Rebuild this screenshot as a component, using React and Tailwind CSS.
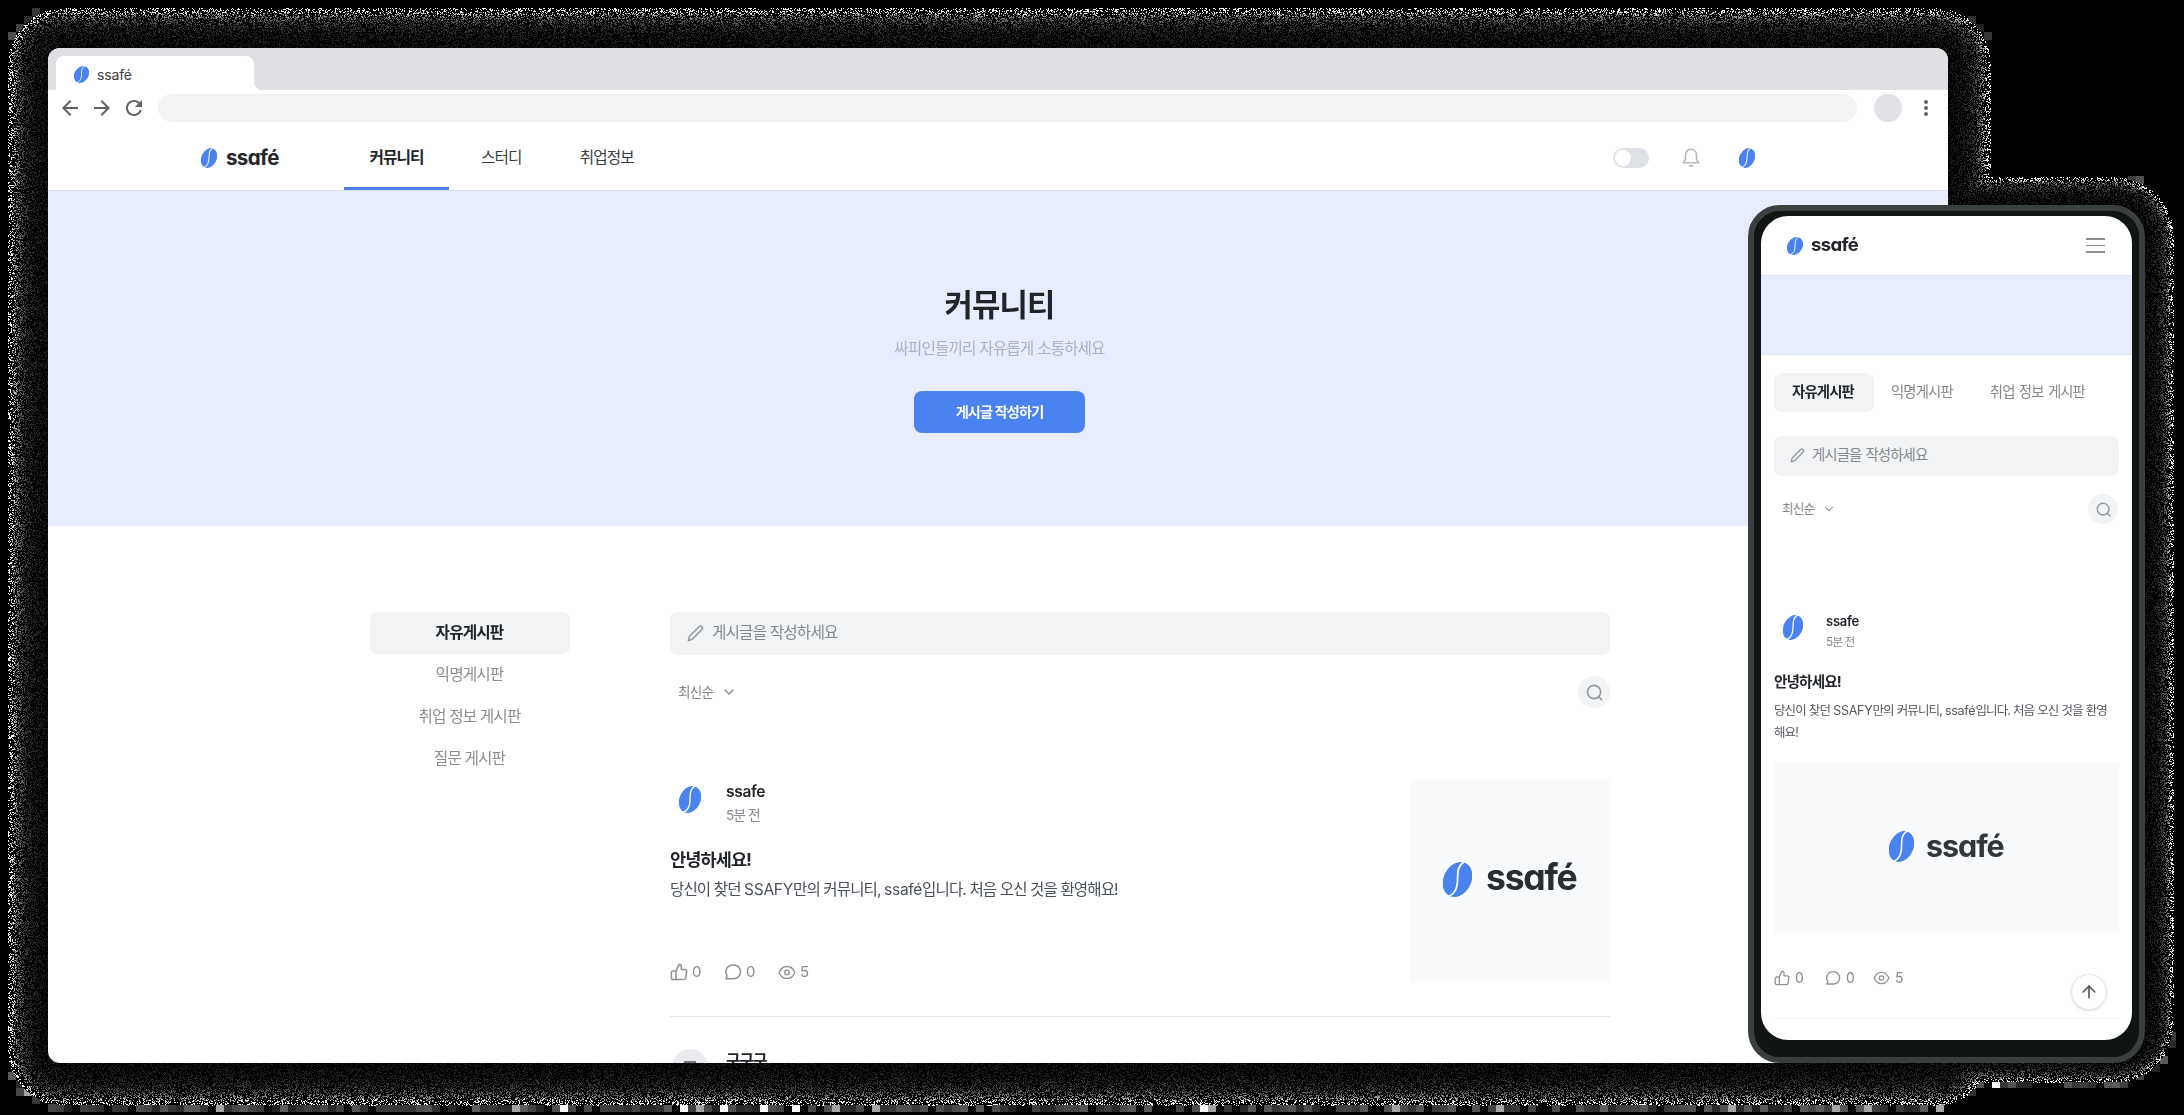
import { useLayoutEffect, useRef } from "react";
import { ChevronDown, ArrowUp } from "lucide-react";
import { MdArrowBack, MdArrowForward, MdRefresh, MdMoreVert } from "react-icons/md";

function Bean({ className, gap = "#ffffff" }) {
  return (
    <svg viewBox="0 0 29 35" preserveAspectRatio="none" className={className}>
      <ellipse cx="14.5" cy="17.5" rx="13.8" ry="18.2" transform="rotate(27 14.5 17.5)" fill="#4a83f0" />
      <path d="M21.5 -0.5C14 4.5 14.8 10 14.6 17C14.4 26 12.5 31.500 4.500 35" fill="none" stroke={gap} strokeWidth="1.8" />
    </svg>
  );
}

const Pencil = ({ className }) => (
  <svg viewBox="0 0 18 18" fill="none" stroke="#989b9e" strokeWidth="1.7" strokeLinejoin="round" className={className}>
    <path d="M1.500 16.500L2.500 12.200L12.800 1.900C13.600 1.100 14.900 1.100 15.700 1.900C16.500 2.700 16.500 4 15.700 4.800L5.500 15.200Z" />
  </svg>
);

const SearchIcon = ({ className }) => (
  <svg viewBox="0 0 18 18" fill="none" stroke="#989b9e" strokeWidth="1.8" strokeLinecap="round" className={className}>
    <circle cx="8.500" cy="8.500" r="7" />
    <path d="M13.500 13.500L16.500 16.500" />
  </svg>
);

const ThumbIcon = ({ className }) => (
  <svg viewBox="0 0 24 24" fill="none" stroke="#8f9296" strokeWidth="2" strokeLinejoin="round" className={className}>
    <path d="M8 10.500L12 1.800C13.700 1.800 15 3.100 15 4.800V8.800H20.300C21.600 8.800 22.500 10 22.300 11.200L20.900 20.400C20.700 21.400 19.900 22 18.900 22H8M8 10.500V22M8 10.500H4.500C3 10.500 1.800 11.600 1.800 13V19.500C1.800 20.900 3 22 4.500 22H8" />
  </svg>
);

const CommentIcon = ({ className }) => (
  <svg viewBox="0 0 24 24" fill="none" stroke="#8f9296" strokeWidth="2" strokeLinejoin="round" className={className}>
    <path d="M12.500 2.500C18 2.500 22 6.500 22 11.700C22 17 18 21 12.500 21H2.500L4.200 17.500C2 13.500 2.200 10 3.600 7.200C5.300 4.200 8.500 2.500 12.500 2.500Z" />
  </svg>
);

const EyeIcon = ({ className }) => (
  <svg viewBox="0 0 26 22" fill="none" stroke="#8f9296" strokeWidth="2" className={className}>
    <path d="M1.500 11C3.800 5.200 8 2.200 13 2.200S22.200 5.200 24.500 11C22.200 16.800 18 19.800 13 19.800S3.800 16.800 1.500 11Z" />
    <circle cx="13" cy="11" r="3.400" />
  </svg>
);

const BellIcon = () => (
  <svg viewBox="0 0 18 20" fill="none" stroke="#b4b8bb" strokeWidth="1.600" strokeLinejoin="round" className="h-5 w-[18px]">
    <path d="M3.500 7C3.500 3.500 5.900 1.300 9 1.300S14.500 3.500 14.500 7V11.500L16.600 14.700H1.400L3.500 11.500Z" />
    <path d="M7 18H11" strokeWidth="1.800" />
  </svg>
);

const Latin = ({ children }) => <span className="tracking-[-0.02em]">{children}</span>;

function Wordmark({ className }) {
  return <span className={"font-['Inter'] [font-feature-settings:'cv11'] " + className}>ssafé</span>;
}

function roundedDistance(x, y, [left, top, right, bottom], radius) {
  const dx = Math.max(left + radius - x, 0, x - right + radius);
  const dy = Math.max(top + radius - y, 0, y - bottom + radius);
  return Math.hypot(dx, dy) - radius;
}

function GrainShadow() {
  const ref = useRef(null);
  useLayoutEffect(() => {
    const w = 2184;
    const h = 1115;
    const ctx = ref.current.getContext("2d");
    const image = ctx.createImageData(w, h);
    let seed = 20231;
    const random = () => {
      seed = (seed * 1664525 + 1013904223) >>> 0;
      return seed / 4294967296;
    };
    const depth = (x, y) =>
      Math.min(
        roundedDistance(x, y, [50, 50, 1948, 1063], 12) / 42,
        roundedDistance(x, y, [1748, 205, 2145, 1054], 30) / 28
      );
    const put = (x, y, v) => {
      const i = (y * w + x) * 4;
      image.data[i] = image.data[i + 1] = image.data[i + 2] = v;
      image.data[i + 3] = 255;
    };
    for (let y = 0; y < h; y++) {
      for (let x = 0; x < w; x++) {
        const t = depth(x, y);
        const r = random();
        const s = random();
        if (t < 0 || t > 1) continue;
        const chance = t > 0.75 ? 0.44 - (t - 0.75) * 0.7 : 0.44;
        if (r < chance) put(x, y, Math.min(255, (8 + s * 22) / Math.pow(1.04 - t, 1.25)));
      }
    }
    for (let cy = 8; cy < 1112; cy += 8) {
      for (let cx = 8; cx < 2176; cx += 8) {
        const t = depth(cx + 4, cy + 4);
        const r = random();
        if (t < 0.98 || t > 1.12 || r < 0.2) continue;
        const v = r > 0.98 ? 255 : r > 0.93 ? 165 : 15 + r * 85;
        for (let y = cy; y < cy + 8; y++)
          for (let x = cx; x < cx + 8; x++) if (depth(x, y) > 0.98) put(x, y, v);
      }
    }
    ctx.putImageData(image, 0, 0);
  }, []);
  return <canvas ref={ref} width={2184} height={1115} className="absolute left-0 top-0" />;
}

function Stats({ small }) {
  const text = small ? "ml-[5px] text-[14px] leading-5 text-[#85888c]" : "ml-1 text-[15px] leading-5 text-[#85888c]";
  const w = small ? "flex w-[51px] items-center" : "flex w-[54px] items-center";
  const w2 = small ? "flex w-[48px] items-center" : "flex w-[54px] items-center";
  const icon = small ? "size-4" : "size-[18px]";
  return (
    <div className="flex h-5 items-center font-['Inter']">
      <span className={w}><ThumbIcon className={icon} /><span className={text}>0</span></span>
      <span className={w2}><CommentIcon className={icon} /><span className={text}>0</span></span>
      <span className="flex items-center"><EyeIcon className={small ? "h-[14px] w-[17px]" : "h-[15px] w-[18px]"} /><span className={text}>5</span></span>
    </div>
  );
}

function BrowserWindow() {
  const boards = ["익명게시판", "취업 정보 게시판", "질문 게시판"];
  return (
    <div className="relative h-[1015px] w-[1900px] overflow-hidden rounded-xl bg-white">
      <div className="flex h-[42px] bg-[#dfe0e4] pl-2 pt-2">
        <div className="flex h-[34px] w-[198px] items-center rounded-t-lg bg-white pl-[18px] pt-0.5">
          <Bean className="h-[17px] w-[15px]" />
          <span className="ml-2 text-[14px] tracking-[-0.01em] text-[#3c4043]">ssafé</span>
        </div>
        <div className="h-[34px] w-2 bg-white"><div className="h-full rounded-bl-lg bg-[#dfe0e4]" /></div>
      </div>
      <div className="flex h-9 items-center pl-2.5 text-[#5f6164]">
        <MdArrowBack className="size-6" />
        <MdArrowForward className="ml-2 size-6" />
        <MdRefresh className="ml-2 size-6" />
        <div className="ml-3 h-7 w-[1699px] rounded-full bg-[#f1f3f4]" />
        <div className="ml-[17px] size-7 rounded-full bg-[#dfe1e5]" />
        <MdMoreVert className="ml-3 size-6" />
      </div>

      <div className="flex h-[65px] items-center border-b border-[#dde1ea] pl-[153px] text-[15.700px] text-[#3a3d40]">
        <Bean className="h-5 w-4" />
        <Wordmark className="ml-[9px] w-[118px] pb-px text-[20.500px] font-bold leading-5 tracking-[-0.03em] text-[#222529]" />
        <div className="flex h-[64px] w-[105px] items-center justify-center border-b-[3px] border-[#4a7fe5] pt-0.5 font-bold text-[#212529]">커뮤니티</div>
        <span className="ml-[32px]">스터디</span>
        <span className="ml-[58px]">취업정보</span>
        <div className="ml-[979px] flex h-5 w-9 items-center rounded-full bg-[#dee2e6] pl-0.5">
          <div className="size-4 rounded-full bg-white" />
        </div>
        <div className="ml-[33px]"><BellIcon /></div>
        <Bean className="ml-[39px] h-5 w-4" />
      </div>

      <div className="flex h-[335px] flex-col items-center bg-[#e7edfe] pl-[3px] pt-[90px]">
        <h1 className="text-[30.800px] font-bold leading-[48px] text-[#212529]">커뮤니티</h1>
        <p className="mt-2 text-[15.700px] leading-6 text-[#adb3bd]">싸피인들끼리 자유롭게 소통하세요</p>
        <button className="mt-[30px] flex h-[42px] w-[171px] items-center justify-center rounded-lg bg-[#4a83f0] text-[14.200px] font-bold text-white">게시글 작성하기</button>
      </div>

      <div className="flex pl-[322px] pt-[86px]">
        <div className="w-[200px] text-center text-[15.700px] text-[#8b8f93]">
          <div className="h-[42px] rounded-lg bg-[#f1f3f5] pr-px font-bold leading-[42px] text-[#212529]">자유게시판</div>
          {boards.map((b) => (
            <div key={b} className="h-[42px] pr-px leading-[42px]">{b}</div>
          ))}
        </div>
        <div className="ml-[100px] w-[940px]">
          <div className="flex h-[43px] items-center rounded-lg bg-[#f1f3f5] pl-[17px] pb-px text-[15.700px] text-[#85898d]">
            <Pencil className="size-[17px]" />
            <span className="ml-2">게시글을 작성하세요</span>
          </div>
          <div className="mt-[21px] flex h-8 items-center justify-between pl-2 text-[13.700px] text-[#85898d]">
            <span className="flex items-center">최신순 <ChevronDown className="ml-2 size-4" /></span>
            <div className="flex size-8 items-center justify-center rounded-full bg-[#f1f3f5]"><SearchIcon className="size-[17px]" /></div>
          </div>
          <div className="mt-[72px] flex h-[237px] justify-between border-b border-[#e4e6e8]">
            <div className="pt-px">
              <div className="flex h-10">
                <Bean className="ml-[9px] mt-[5px] h-[27px] w-[22px]" />
                <div className="ml-[25px]">
                  <div className="text-[15.500px] font-semibold leading-[22px] tracking-[-0.02em] text-[#212529]">ssafe</div>
                  <div className="text-[13.700px] leading-6 text-[#868b91]">5분 전</div>
                </div>
              </div>
              <div className="mt-[25px] text-[17.500px] font-bold leading-7 text-[#212529]">안녕하세요!</div>
              <div className="mt-0.5 text-[15.550px] leading-7 text-[#495057]">당신이 찾던 <Latin>SSAFY</Latin>만의 커뮤니티, <Latin>ssafé</Latin>입니다. 처음 오신 것을 환영해요!</div>
              <div className="mt-[58px]"><Stats /></div>
            </div>
            <div className="flex h-[201px] w-[200px] items-center bg-[#f8fafc] pb-[3px] pl-[33px]">
              <Bean className="h-[35px] w-[29px]" gap="#f8fafc" />
              <Wordmark className="ml-[14px] pb-0.5 text-[35.500px] font-bold leading-9 tracking-[-0.035em] text-[#292c31]" />
            </div>
          </div>
          <div className="flex pl-0.5 pt-8">
            <div className="flex size-[36px] justify-center rounded-full bg-[#e9ebee] pt-[12px]"><div className="h-4 w-3 bg-[#76797d]" /></div>
            <div className="ml-[18px] text-[15.700px] font-bold leading-6 text-[#212529]">구구구</div>
          </div>
        </div>
      </div>
    </div>
  );
}

function Phone() {
  return (
    <div className="absolute left-[1748px] top-[205px] h-[858px] w-[397px] rounded-[32px] border-[6px] border-[#3a3f40] bg-[#101413] px-[7px] pt-[5px]">
      <div className="relative h-[824px] w-[371px] overflow-hidden rounded-[27px] bg-white">
        <div className="flex h-[59px] items-center pl-[26px]">
          <Bean className="h-[18px] w-[16px]" />
          <Wordmark className="ml-2 pb-[3px] text-[18.500px] font-bold leading-5 tracking-[-0.035em] text-[#222529]" />
          <div className="ml-auto mr-[27px] flex w-[19px] flex-col gap-[5px]">
            <div className="h-[1.500px] bg-[#8a8d90]" /><div className="h-[1.500px] bg-[#8a8d90]" /><div className="h-[1.500px] bg-[#8a8d90]" />
          </div>
        </div>
        <div className="h-20 border-y border-[#dfe3f0] bg-[#e7edfe]" />
        <div className="px-[13px] pt-[18px] text-[#85898d]">
          <div className="flex h-[39px] items-center text-[14.400px] [word-spacing:0.08em]">
            <div className="flex h-full w-[100px] items-center justify-center rounded-lg bg-[#f1f3f5] pb-0.5 pr-0.5 font-bold text-[#212529]">자유게시판</div>
            <span className="ml-[17px] pb-0.5">익명게시판</span>
            <span className="ml-[37px] pb-0.5">취업 정보 게시판</span>
          </div>
          <div className="mt-6 flex h-10 items-center rounded-lg bg-[#f1f3f5] pl-4 pb-0.5 text-[14.400px] [word-spacing:0.06em]">
            <Pencil className="size-[15px]" /><span className="ml-[7px]">게시글을 작성하세요</span>
          </div>
          <div className="mt-[18px] flex h-[30px] items-center justify-between pl-2 pr-px text-[12.700px]">
            <span className="flex items-center">최신순<ChevronDown className="ml-2 size-[14px]" strokeWidth={1.75} /></span>
            <div className="flex size-[30px] items-center justify-center rounded-full bg-[#f1f3f5]"><SearchIcon className="size-[15px]" /></div>
          </div>
          <div className="mt-[87px] flex">
            <Bean className="ml-[9px] mt-[4px] h-[25px] w-[20px]" />
            <div className="ml-[23px]">
              <div className="text-[13px] font-semibold leading-5 tracking-[-0.02em] text-[#212529]">ssafe</div>
              <div className="text-[11.700px] leading-[22px] text-[#868b91]">5분 전</div>
            </div>
          </div>
          <div className="mt-[17px] text-[14.600px] font-bold leading-6 text-[#212529]">안녕하세요!</div>
          <div className="mt-[6px] whitespace-nowrap text-[12.500px] leading-[22px] text-[#55595e] [word-spacing:0.03em]">당신이 찾던 <Latin>SSAFY</Latin>만의 커뮤니티, <Latin>ssafé</Latin>입니다. 처음 오신 것을 환영<br />해요!</div>
          <div className="mt-[18px] flex h-[171px] items-center bg-[#f8fafc] pb-0.5 pl-[115px]">
            <Bean className="h-[31px] w-[25px]" gap="#f8fafc" />
            <Wordmark className="ml-3 pb-0.5 text-[30.500px] font-bold leading-8 tracking-[-0.035em] text-[#32363b]" />
          </div>
          <div className="mt-[35px] h-[51px] border-b border-[#f0f1f2]"><Stats small /></div>
        </div>
        <div className="absolute bottom-[30px] right-[25px] flex size-9 items-center justify-center rounded-full border border-[#e3e5e7] bg-white shadow-sm">
          <ArrowUp className="size-5 text-[#55595b]" strokeWidth={2} />
        </div>
      </div>
    </div>
  );
}

export default function App() {
  return (
    <div className="relative h-[1115px] w-[2184px] overflow-hidden bg-black pl-12 pt-12 font-['Inter','Noto_Sans_CJK_KR',sans-serif] tracking-[-0.055em]">
      <GrainShadow />
      <BrowserWindow />
      <Phone />
    </div>
  );
}
